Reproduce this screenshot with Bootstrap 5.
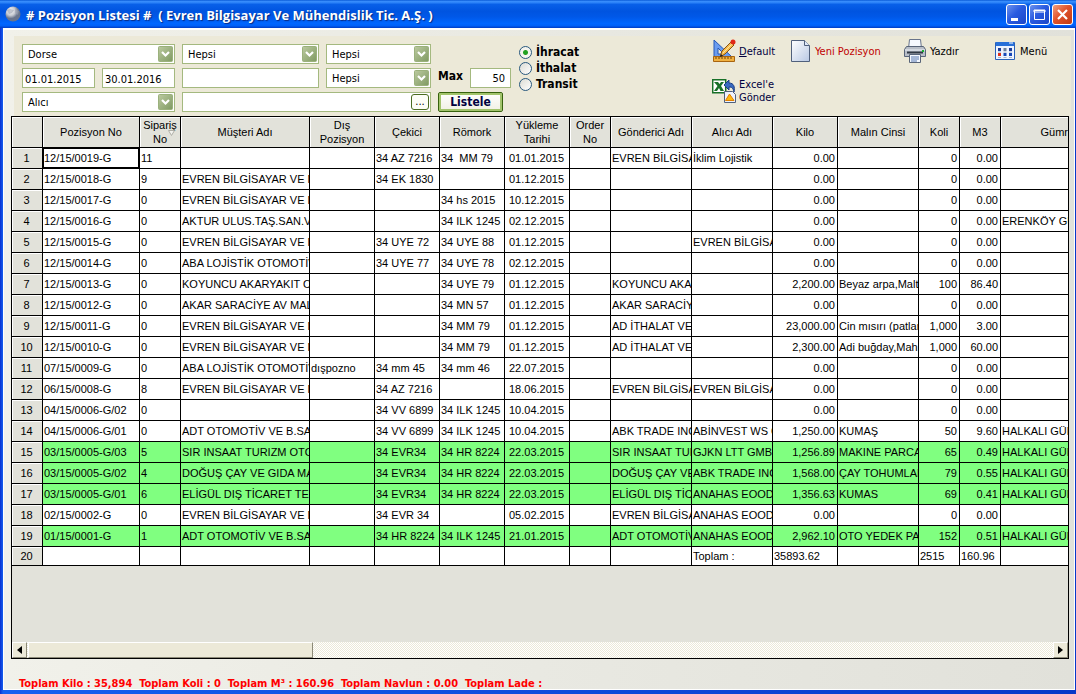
<!DOCTYPE html>
<html lang="tr">
<head>
<meta charset="utf-8">
<meta name="viewport" content="width=device-width, initial-scale=1">
<title>Pozisyon Listesi</title>
<link href="https://cdn.jsdelivr.net/npm/bootstrap@5.3.0/dist/css/bootstrap.min.css" rel="stylesheet">
<style>
:root{--ui:"DejaVu Sans Condensed","DejaVu Sans",sans-serif;--grid:"Liberation Sans",Arial,sans-serif;--olive:#a4b97f;--panel:#ece9d8;--head:#e2e2da}
body{font:11px/13px var(--ui);color:#000;background:#0a3fd8}
button,input,select{font-family:inherit;font-size:11px;line-height:13px;color:#000}
.title-bar{height:28px;padding:0 3px 0 5px;background:linear-gradient(#0a5bd8 0,#3c92ff 6%,#0860e8 16%,#0054e0 40%,#0058e8 60%,#0066ff 84%,#0060f8 92%,#003cc4 100%)}
.title-bar h1{padding-top:2px;font:bold 13px/18px "Open Sans",sans-serif;color:#fff;text-shadow:1px 1px 1px #0a2a80;white-space:pre}
.win-btn{width:21px;height:21px;border:1px solid #fff;border-radius:3px;background:linear-gradient(135deg,#6c92ee,#2a5be0 45%,#1b46c8)}
.win-close{background:linear-gradient(135deg,#f0a080,#e0532c 45%,#c03a14)}
.win-btn svg{display:block}
.win-frame{padding:0 1px 4px 3px;background:linear-gradient(90deg,#0a30d0 0,#1560f0 3px,#0838c8)}
.win-body{border:1px solid #fff;border-top-width:2px;background:linear-gradient(90deg,#f1f1ea,#e1e1da)}
.tool-panel{margin:6px 3px 0 10px;padding:8px 0 4px 8px;background:var(--panel)}
.filters{display:grid;grid-template-columns:73px 73px 137px 105px;column-gap:7px;row-gap:4px}
.span-2{grid-column:span 2}
.field{width:100%;min-width:0;height:20px;border:1px solid var(--olive);border-radius:0;background:#fff;padding:2px 5px 1px}
.field-date{padding:3px 2px 0}
select.field{appearance:none;padding:1px 18px 1px 5px;background:#fff url("data:image/svg+xml,%3Csvg xmlns='http://www.w3.org/2000/svg' width='15' height='16'%3E%3Cdefs%3E%3ClinearGradient id='g' x2='1' y2='1'%3E%3Cstop stop-color='%23bccaa0'/%3E%3Cstop offset='1' stop-color='%237f9a62'/%3E%3C/linearGradient%3E%3C/defs%3E%3Crect x='.5' y='.5' width='14' height='15' rx='1' fill='url(%23g)' stroke='%239bb17c'/%3E%3Cpath d='M4 6l3.500 3.500L11 6' fill='none' stroke='%23fff' stroke-width='2.200'/%3E%3C/svg%3E") no-repeat right 1px center}
.browse-btn{right:2px;top:2px;width:18px;height:16px;padding:0;border:1px solid #4c6c20;border-radius:3px;background:#fdfdf6;line-height:10px}
.limit-row label{width:32px;padding-top:2px;font-size:12px;font-weight:bold}
.limit-row .field{width:41px}
.list-btn{width:65px;height:20px;padding:0;font-size:12px;font-weight:bold;color:#000040;border:1px solid #37620d;border-radius:2px;background:linear-gradient(#fff,#f0f0e4);box-shadow:inset 0 0 0 2px #a2c46c}
.opt{height:16px;gap:4px;font-size:12px;font-weight:bold}
.opt input{appearance:none;margin:0;width:13px;height:13px;border:1px solid #28587e;border-radius:50%;background:linear-gradient(135deg,#dcdcd4,#fff)}
.opt input:checked{background:radial-gradient(circle,#21a121 0 2px,#f4f4ee 3px)}
.actions{display:grid;grid-template-columns:79px 113px 91px 76px;grid-auto-rows:24px;row-gap:16px;margin-top:-5px}
.actions button{display:flex;align-items:center;gap:3px;padding:0;border:0;background:none;text-align:left;white-space:nowrap;color:#000040}
.actions svg{flex:none}
.grid-box{margin:0 5px 0 7px;border:1px solid #000;background:var(--head);overflow:hidden}
.pos-grid{width:100%;table-layout:fixed;border-collapse:separate;border-spacing:0;font:11px/13px var(--grid)}
.pos-grid th,.pos-grid td{height:21px;padding:0 2px 0 1px;border:solid #000;border-width:0 1px 1px 0;overflow:hidden;white-space:nowrap;vertical-align:middle}
.pos-grid tr>:last-child{border-right:0}
.pos-grid td{background:#fff}
.pos-grid th{background:var(--head);font-weight:normal;text-align:center;box-shadow:inset 1px 1px #fff}
.pos-grid thead th{height:31px;padding:0 1px;white-space:normal;line-height:14px}
.pos-grid thead th:last-child{text-align:right;padding:0}
.pos-grid .done td{background:#80ff80}
.pos-grid .sum-row>*{height:19px}
.pos-grid td.current{box-shadow:inset 0 0 0 1px #000}
.sort-mark{right:4px;top:13px}
.h-scroll{height:16px;background:repeating-conic-gradient(#fff 0 25%,#ece9d8 0 50%) 0 0/2px 2px}
.h-scroll button,.h-thumb{border:1px solid;border-color:#fff #8c8a78 #8c8a78 #fff;background:var(--panel);padding:0}
.h-scroll button{width:15px;display:flex;align-items:center;justify-content:center}
.h-thumb{width:27%;margin-left:1px}
.totals{padding:18px 0 0 15px;height:30px;font-weight:bold;color:#f00;white-space:pre}
</style>
</head>
<body class="d-flex flex-column min-vh-100">
<header class="title-bar d-flex align-items-center">
  <svg width="17" height="17" viewBox="0 0 17 17" aria-hidden="true"><defs><radialGradient id="ball" cx=".35" cy=".3"><stop stop-color="#fff"/><stop offset=".6" stop-color="#c4c8d0"/><stop offset="1" stop-color="#68748c"/></radialGradient></defs><circle cx="8" cy="8" r="7.500" fill="url(#ball)"/><path d="M2 4l3-1 4 1-2 3-3 1zM10 3l4 2-1 4-3-2z" fill="#9ba2b0" opacity=".6"/></svg>
  <h1 class="m-0 ms-1 flex-grow-1"># Pozisyon Listesi #  ( Evren Bilgisayar Ve Mühendislik Tic. A.Ş. )</h1>
  <div class="d-flex" style="gap:2px">
    <button class="win-btn p-0" aria-label="Simge durumuna küçült"><svg width="19" height="19"><path d="M4 13h7v3H4z" fill="#fff"/></svg></button>
    <button class="win-btn p-0" aria-label="Ekranı kapla"><svg width="19" height="19"><path d="M4.500 5.500h10v9h-10zM4 5h11v2H4z" fill="none" stroke="#fff"/></svg></button>
    <button class="win-btn win-close p-0" aria-label="Kapat"><svg width="19" height="19"><path d="M5 5l9 9M14 5l-9 9" stroke="#fff" stroke-width="2.200"/></svg></button>
  </div>
</header>
<div class="win-frame d-flex flex-column flex-grow-1">
<main class="win-body d-flex flex-column flex-grow-1">
  <form class="tool-panel d-flex align-items-start" onsubmit="return false">
    <div class="filters">
      <select class="field span-2" aria-label="Tür"><option>Dorse</option></select>
      <select class="field" aria-label="Firma"><option>Hepsi</option></select>
      <select class="field" aria-label="Durum"><option>Hepsi</option></select>
      <input class="field field-date" aria-label="Başlangıç" value="01.01.2015">
      <input class="field field-date" aria-label="Bitiş" value="30.01.2016">
      <input class="field" aria-label="Arama">
      <select class="field" aria-label="Tip"><option>Hepsi</option></select>
      <select class="field span-2" aria-label="Taraf"><option>Alıcı</option></select>
      <div class="span-2 position-relative"><input class="field d-block" aria-label="Alıcı"><button class="browse-btn position-absolute" type="button">...</button></div>
    </div>
    <div class="d-flex flex-column gap-1" style="margin:24px 0 0 7px">
      <div class="limit-row d-flex"><label for="max">Max</label><input id="max" class="field text-end" value="50"></div>
      <button class="list-btn" type="submit">Listele</button>
    </div>
    <div class="d-flex flex-column ms-2">
      <label class="opt d-flex align-items-center"><input type="radio" name="yon" checked>İhracat</label>
      <label class="opt d-flex align-items-center"><input type="radio" name="yon">İthalat</label>
      <label class="opt d-flex align-items-center"><input type="radio" name="yon">Transit</label>
    </div>
    <div class="actions ms-auto">
      <button type="button"><svg width="24" height="24"><path d="M2 1v17h18z" fill="#6a9cf0" stroke="#2458b8"/><path d="M6 9v6h6z" fill="#ece9d8" stroke="#2458b8"/><path d="M1.500 17.500h21v5h-21z" fill="#f0b040" stroke="#a86410"/><path d="M4 18v2m3-2v2m3-2v2m3-2v2m3-2v2m3-2v2" stroke="#704000"/><path d="M8 18l2-6L19 3l3 3-9 9z" fill="#f4bc50" stroke="#8a5010"/><path d="M11 14l9-9" stroke="#ffe49c"/><path d="M8 18l1-3 2 2z" fill="#222"/><circle cx="21" cy="3" r="2.500" fill="#e02818"/></svg><span><u>D</u>efault</span></button>
      <button type="button" style="color:#c00000"><svg width="21" height="24"><defs><linearGradient id="pg" x2="1" y2="1"><stop stop-color="#fff"/><stop offset="1" stop-color="#b8c8e4"/></linearGradient></defs><path d="M.5 1.500h13l5 5v16H.5z" fill="url(#pg)" stroke="#50607c"/><path d="M13.500 1.500v5h5" fill="#dfe8f8" stroke="#50607c"/></svg>Yeni Pozisyon</button>
      <button type="button" class="text-black"><svg width="23" height="24"><path d="M5.500.5h11l1 9h-13z" fill="#f6f9ff" stroke="#68748c"/><path d="M2.500 7.500h17l2 3v7h-21v-7z" fill="#b8bec8" stroke="#586478"/><path d="M1 11h20" stroke="#eef2f8"/><path d="M3 13.500h16" stroke="#303844" stroke-width="2"/><path d="M5.500 15.500h11v8h-11z" fill="#f4f8ff" stroke="#586478"/><path d="M7 18h8m-8 2h8m-8 2h6" stroke="#5878b0"/><path d="M18 11h2v2h-2z" fill="#18b030"/></svg>Yazdır</button>
      <button type="button" class="text-black"><svg width="22" height="24"><path d="M.5 3.500h19v17H.5z" fill="#eef4ff" stroke="#2860b8"/><path d="M1 3h18v4H1z" fill="#2870d8"/><path d="M14 4h4" stroke="#fff"/><path d="M3 9h3v3H3zm11 0h3v3h-3z" fill="#1c3c98"/><path d="M8.500 9h3v3h-3z" fill="#708098"/><path d="M3 14h3v3H3z" fill="#e03018"/><path d="M8.500 14h3v3h-3zm5.500 0h3v3h-3z" fill="#1848b8"/><path d="M3 13h3m2.500 0h3m2.500 0h3M3 18.500h3m2.500 0h3m2.500 0h3" stroke="#a8b4c8"/></svg>Menü</button>
      <button type="button"><svg width="24" height="24"><path d="M.7.700h13v13H.7z" fill="#fff" stroke="#187028" stroke-width="1.500"/><path d="M2 3h4l1.500 2L9 3h3L9 7l3 5H8.500L7 9l-2 3H2l3.500-5z" fill="#187028"/><path d="M12.500 12.500h8l3 3v8h-11z" fill="#eef2fc" stroke="#50607c"/><path d="M13.500 21.500l4-6.500 4.500 6.500z" fill="#ffb810" stroke="#e08000"/><path d="M12 6l5-5v3c5 0 6 4 5 9-1-4-2-5-5-5v3z" fill="#3868c0" stroke="#183c84"/></svg><span>Excel'e<br>Gönder</span></button>
    </div>
  </form>
  <section class="grid-box d-flex flex-column flex-grow-1">
    <table class="pos-grid">
      <colgroup><col style="width:31px"><col style="width:97px"><col style="width:41px"><col style="width:129px"><col style="width:65px"><col style="width:65px"><col style="width:65px"><col style="width:65px"><col style="width:41px"><col style="width:81px"><col style="width:81px"><col style="width:65px"><col style="width:81px"><col style="width:41px"><col style="width:41px"><col></colgroup>
      <thead><tr><th></th><th>Pozisyon No</th><th class="position-relative">Sipariş No<svg class="sort-mark position-absolute" width="8" height="7" aria-hidden="true"><path d="M.5.500h6L3.500 5.500z" fill="#f4f4f0" stroke="#b0b0a8"/></svg></th><th>Müşteri Adı</th><th>Dış Pozisyon</th><th>Çekici</th><th>Römork</th><th>Yükleme Tarihi</th><th>Order No</th><th>Gönderici Adı</th><th>Alıcı Adı</th><th>Kilo</th><th>Malın Cinsi</th><th>Koli</th><th>M3</th><th>Gümr</th></tr></thead>
      <tbody id="rows"></tbody>
    </table>
    <div class="h-scroll d-flex mt-auto">
      <button type="button" aria-label="Sola kaydır"><svg width="5" height="8"><path d="M5 0v8L0 4z"/></svg></button>
      <div class="h-thumb"></div>
      <button type="button" class="ms-auto" aria-label="Sağa kaydır"><svg width="5" height="8"><path d="M0 0v8l5-4z"/></svg></button>
    </div>
  </section>
  <footer class="totals">Toplam Kilo : 35,894  Toplam Koli : 0  Toplam M³ : 160.96  Toplam Navlun : 0.00  Toplam Lade :</footer>
</main>
</div>
<script src="https://cdn.jsdelivr.net/npm/bootstrap@5.3.0/dist/js/bootstrap.bundle.min.js"></script>
<script>
// position | order | customer | external | tractor | trailer | date | order no | sender | receiver | kg | goods | packages | m3 | customs
const data = `12/15/0019-G|11|||34 AZ 7216|34  MM 79|01.01.2015||EVREN BİLGİSA|İklim Lojistik|0.00||0|0.00|
12/15/0018-G|9|EVREN BİLGİSAYAR VE M||34 EK 1830||01.12.2015||||0.00||0|0.00|
12/15/0017-G|0|EVREN BİLGİSAYAR VE M|||34 hs 2015|10.12.2015||||0.00||0|0.00|
12/15/0016-G|0|AKTUR ULUS.TAŞ.SAN.VE|||34 ILK 1245|02.12.2015||||0.00||0|0.00|ERENKÖY GÜ
12/15/0015-G|0|EVREN BİLGİSAYAR VE M||34 UYE 72|34 UYE 88|01.12.2015|||EVREN BİLGİSA|0.00||0|0.00|
12/15/0014-G|0|ABA LOJİSTİK OTOMOTİV||34 UYE 77|34 UYE 78|02.12.2015||||0.00||0|0.00|
12/15/0013-G|0|KOYUNCU AKARYAKIT O|||34 UYE 79|01.12.2015||KOYUNCU AKAI||2,200.00|Beyaz arpa,Malt|100|86.40|
12/15/0012-G|0|AKAR SARACİYE AV MAL|||34 MN 57|01.12.2015||AKAR SARACİY||0.00||0|0.00|
12/15/0011-G|0|EVREN BİLGİSAYAR VE M|||34 MM 79|01.12.2015||AD İTHALAT VE||23,000.00|Cin mısırı (patlam|1,000|3.00|
12/15/0010-G|0|EVREN BİLGİSAYAR VE M|||34 MM 79|01.12.2015||AD İTHALAT VE||2,300.00|Adi buğday,Mah|1,000|60.00|
07/15/0009-G|0|ABA LOJİSTİK OTOMOTİV|dışpozno|34 mm 45|34 mm 46|22.07.2015||||0.00||0|0.00|
06/15/0008-G|8|EVREN BİLGİSAYAR VE M||34 AZ 7216||18.06.2015||EVREN BİLGİSA|EVREN BİLGİSA|0.00||0|0.00|
04/15/0006-G/02|0|||34 VV 6899|34 ILK 1245|10.04.2015||||0.00||0|0.00|
04/15/0006-G/01|0|ADT OTOMOTİV VE B.SAY||34 VV 6899|34 ILK 1245|10.04.2015||ABK TRADE INC|ABİNVEST WS C|1,250.00|KUMAŞ|50|9.60|HALKALI GÜM
03/15/0005-G/03|5|SIR INSAAT TURIZM OTOM||34 EVR34|34 HR 8224|22.03.2015||SIR INSAAT TUR|GJKN LTT GMBH|1,256.89|MAKINE PARCAL|65|0.49|HALKALI GÜM
03/15/0005-G/02|4|DOĞUŞ ÇAY VE GIDA MA||34 EVR34|34 HR 8224|22.03.2015||DOĞUŞ ÇAY VE|ABK TRADE INC|1,568.00|ÇAY TOHUMLAR|79|0.55|HALKALI GÜM
03/15/0005-G/01|6|ELİGÜL DIŞ TİCARET TEKS||34 EVR34|34 HR 8224|22.03.2015||ELİGÜL DIŞ TİCA|ANAHAS EOOD|1,356.63|KUMAS|69|0.41|HALKALI GÜM
02/15/0002-G|0|EVREN BİLGİSAYAR VE M||34 EVR 34||05.02.2015||EVREN BİLGİSA|ANAHAS EOOD|0.00||0|0.00|
01/15/0001-G|1|ADT OTOMOTİV VE B.SAY||34 HR 8224|34 ILK 1245|21.01.2015||ADT OTOMOTİV|ANAHAS EOOD|2,962.10|OTO YEDEK PAR|152|0.51|HALKALI GÜM
|||||||||Toplam :|35893.62||2515|160.96|`.split('\n');
const done = [15, 16, 17, 19], last = data.length;
document.getElementById('rows').innerHTML = data.map((line, i) => {
  const n = i + 1;
  const cells = line.split('|').map((text, c) => {
    let cls = n !== last && [10, 12, 13].includes(c) ? 'text-end' : c === 6 ? 'text-center' : '';
    if (n === 1 && c === 0) cls = 'current';
    return `<td class="${cls}">${text.replace('  ', '&nbsp; ')}</td>`;
  }).join('');
  return `<tr class="${done.includes(n) ? 'done' : n === last ? 'sum-row' : ''}"><th scope="row">${n}</th>${cells}</tr>`;
}).join('');
</script>
</body>
</html>
